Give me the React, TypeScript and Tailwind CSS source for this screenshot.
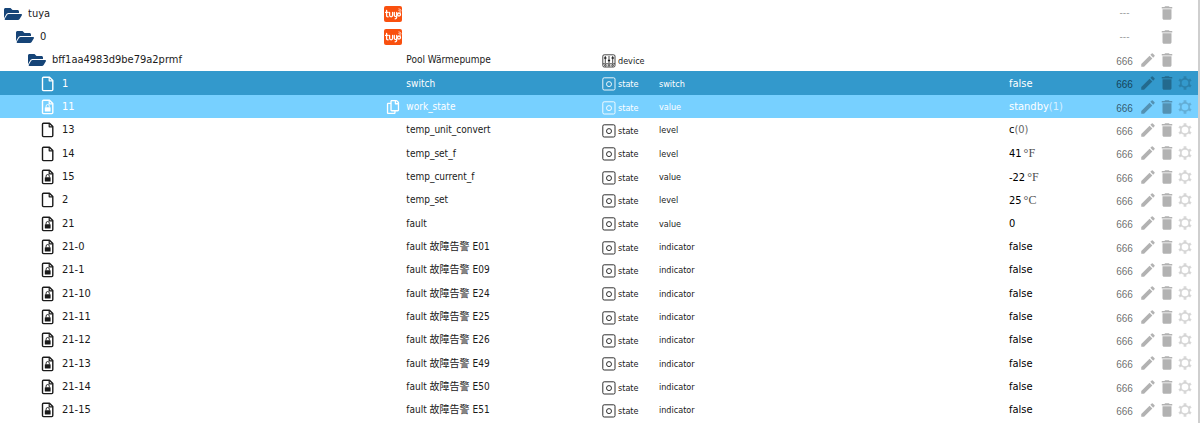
import type { ReactNode } from 'react'
import { clsx } from 'clsx'
import { FaFolderOpen, FaRegCopy } from 'react-icons/fa'
import { MdDelete, MdEdit } from 'react-icons/md'

type Kind = 'folder' | 'file' | 'locked'

interface TreeRow {
  id: string
  level: number
  kind: Kind
  name?: string
  type?: 'device' | 'state'
  role?: string
  value?: string
  suffix?: string
  unit?: string
  tone?: 'selected' | 'hovered'
}

const fault = (id: string, code: string): TreeRow => ({
  id,
  level: 3,
  kind: 'locked',
  name: `fault 故障告警 ${code}`,
  type: 'state',
  role: 'indicator',
  value: 'false',
})

const rows: TreeRow[] = [
  { id: 'tuya', level: 0, kind: 'folder' },
  { id: '0', level: 1, kind: 'folder' },
  { id: 'bff1aa4983d9be79a2prmf', level: 2, kind: 'folder', name: 'Pool Wärmepumpe', type: 'device' },
  { id: '1', level: 3, kind: 'file', name: 'switch', type: 'state', role: 'switch', value: 'false', tone: 'selected' },
  { id: '11', level: 3, kind: 'locked', name: 'work_state', type: 'state', role: 'value', value: 'standby', suffix: '(1)', tone: 'hovered' },
  { id: '13', level: 3, kind: 'file', name: 'temp_unit_convert', type: 'state', role: 'level', value: 'c', suffix: '(0)' },
  { id: '14', level: 3, kind: 'file', name: 'temp_set_f', type: 'state', role: 'level', value: '41', unit: '°F' },
  { id: '15', level: 3, kind: 'locked', name: 'temp_current_f', type: 'state', role: 'value', value: '-22', unit: '°F' },
  { id: '2', level: 3, kind: 'file', name: 'temp_set', type: 'state', role: 'level', value: '25', unit: '°C' },
  { id: '21', level: 3, kind: 'locked', name: 'fault', type: 'state', role: 'value', value: '0' },
  fault('21-0', 'E01'),
  fault('21-1', 'E09'),
  fault('21-10', 'E24'),
  fault('21-11', 'E25'),
  fault('21-12', 'E26'),
  fault('21-13', 'E49'),
  fault('21-14', 'E50'),
  fault('21-15', 'E51'),
]

const indents = ['pl-1', 'pl-4', 'pl-7', 'pl-10']

const tones = {
  selected: 'bg-[#3399cc] text-white',
  hovered: 'bg-[#77d0ff] text-white',
}

function FileIcon({ locked }: { locked: boolean }) {
  return (
    <svg viewBox="0 0 16 16" className="h-4 w-4 shrink-0" fill="none" stroke="currentColor" strokeWidth="1.4" strokeLinejoin="round" aria-hidden="true">
      <path d="M3.5 1.2h6l3.3 3.3v9.1a1 1 0 0 1-1 1H3.5a1 1 0 0 1-1-1V2.2a1 1 0 0 1 1-1z" />
      <path d="M9.2 1.4v3.4h3.4" strokeWidth="1.2" />
      {locked && (
        <>
          <rect x="4.8" y="8.2" width="5.8" height="4.4" rx="0.5" fill="currentColor" stroke="none" />
          <path d="M6.1 8.4V7.1a1.6 1.6 0 0 1 3.2 0v1.3" strokeWidth="0.9" />
        </>
      )}
    </svg>
  )
}

function StateIcon() {
  return (
    <svg viewBox="0 0 14 14" className="h-3.5 w-3.5 shrink-0" fill="none" stroke="currentColor" strokeWidth="0.9" aria-hidden="true">
      <rect x="0.8" y="0.8" width="12.2" height="12.2" rx="1.4" />
      <circle cx="7" cy="7.1" r="2.5" />
    </svg>
  )
}

function DeviceIcon() {
  return (
    <svg viewBox="0 0 14 14" className="h-3.5 w-3.5 shrink-0" fill="none" stroke="currentColor" strokeWidth="0.8" aria-hidden="true">
      <rect x="0.8" y="0.8" width="12.2" height="12.2" rx="1.4" />
      <path d="M3.3 2v7M7 2v7M10.7 2v7M1 9.8h12" />
      <path d="M2.2 4h2.2M5.9 6.5h2.2M9.6 4h2.2" strokeWidth="1.4" />
      <circle cx="3.4" cy="11.4" r="0.8" />
      <circle cx="7" cy="11.4" r="0.8" />
      <circle cx="10.6" cy="11.4" r="0.8" />
    </svg>
  )
}

function GearIcon() {
  return (
    <svg viewBox="0 0 16 16" className="h-4 w-4" fill="none" stroke="currentColor" aria-hidden="true">
      <circle cx="8" cy="8" r="4.2" strokeWidth="1.8" />
      <path d="M8 3.2V1.2M8 14.8v-2M3.9 5.6L2.1 4.6M13.9 11.4l-1.800-1M3.900 10.400l-1.800 1M13.900 4.600l-1.800 1" strokeWidth="2.8" />
    </svg>
  )
}

function TuyaLogo() {
  return (
    <svg viewBox="0 0 18 16" className="h-4 w-[18px] shrink-0" role="img" aria-label="tuya">
      <rect width="18" height="16" rx="2" fill="#f9500f" />
      <g fill="none" stroke="#fff" strokeWidth="1.3" strokeLinecap="round" strokeLinejoin="round">
        <path d="M2.6 4.5v4.9q0 1.5 1.5 1.4M1.6 6.4h2.6" />
        <path d="M5.6 6.4v2.9q0 1.5 1.5 1.5t1.500-1.500V6.400" />
        <path d="M10.300 6.400v2.700q0 1.500 1.200 1.500t1.200-1.500V6.400M12.700 9v2.300q0 1.500-1.600 1.500" />
        <circle cx="15" cy="8.500" r="1.500" />
        <path d="M14.800 4.400q1.600 0 1.700 1.800M14.900 2.800q2.100.1 2.300 2" strokeWidth="0.7" />
      </g>
    </svg>
  )
}

function IconButton({ label, className, children }: { label: string; className?: string; children: ReactNode }) {
  return (
    <button type="button" aria-label={label} className={clsx('flex w-[18px] shrink-0 justify-center', className)}>
      {children}
    </button>
  )
}

function ObjectRow({ row }: { row: TreeRow }) {
  const isFolder = row.kind === 'folder'

  return (
    <tr className={clsx('h-[23px] nth-[3n+1]:h-6', row.tone && tones[row.tone])}>
      <td className={clsx('pt-px', indents[row.level])}>
        <div className="flex items-center gap-1.5 text-[11px] leading-4">
          {isFolder ? (
            <FaFolderOpen className="h-[18px] w-[18px] shrink-0 text-[#164477]" />
          ) : (
            <FileIcon locked={row.kind === 'locked'} />
          )}
          <span>{row.id}</span>
        </div>
      </td>
      <td className="pt-px">
        <div className="flex items-center gap-1 text-[10px] leading-4">
          <span className="flex w-[19px] shrink-0 justify-center">
            {isFolder && !row.name && <TuyaLogo />}
            {row.tone === 'hovered' && (
              <button type="button" aria-label="Copy">
                <FaRegCopy className="h-3.5 w-3.5" />
              </button>
            )}
          </span>
          <span>{row.name}</span>
        </div>
      </td>
      <td className="pt-0.5 pl-[3px]">
        {row.type && (
          <div className="flex items-center gap-0.5 text-[9px] leading-4">
            {row.type === 'device' ? <DeviceIcon /> : <StateIcon />}
            <span>{row.type}</span>
          </div>
        )}
      </td>
      <td className="pt-px pl-0.5 text-[9px] leading-4">{row.role}</td>
      <td className="pt-px text-[11px] leading-4">
        <span className={row.tone ? 'text-white' : 'text-black'}>{row.value}</span>
        {row.suffix && <span className="opacity-70">{row.suffix}</span>}
        {row.unit && <span className="ml-0.5 font-['Liberation_Serif',serif] text-xs leading-4 opacity-80">{row.unit}</span>}
      </td>
      <td>
        <div className="flex items-center text-black/30">
          <span
            className={clsx(
              "mr-1.5 w-[17px] text-center font-['Liberation_Sans',sans-serif] text-[10px] leading-4",
              row.type ? 'pt-1 text-black/60' : 'text-black/40',
            )}
          >
            {row.type ? '666' : '---'}
          </span>
          {row.type ? (
            <IconButton label="Edit">
              <MdEdit className="h-[18px] w-[18px]" />
            </IconButton>
          ) : (
            <span className="w-[18px]" />
          )}
          <IconButton label="Delete" className="ml-px">
            <MdDelete className="h-[18px] w-[18px]" />
          </IconButton>
          {!isFolder && (
            <IconButton label="Settings">
              <span className="opacity-50">
                <GearIcon />
              </span>
            </IconButton>
          )}
        </div>
      </td>
    </tr>
  )
}

export default function App() {
  return (
    <main className="min-h-screen overflow-x-auto border-r-2 border-[#cfcfcf] bg-white pt-px font-['DejaVu_Sans_Condensed','Noto_Sans_CJK_TC',sans-serif] text-[#1a1a1a]">
      <table className="w-full table-fixed border-collapse whitespace-nowrap">
        <colgroup>
          <col className="w-[32%]" />
          <col className="w-[18%]" />
          <col className="w-[58px]" />
          <col />
          <col className="w-[107px]" />
          <col className="w-[82px]" />
        </colgroup>
        <tbody>
          {rows.map((row) => (
            <ObjectRow key={row.id} row={row} />
          ))}
        </tbody>
      </table>
    </main>
  )
}
